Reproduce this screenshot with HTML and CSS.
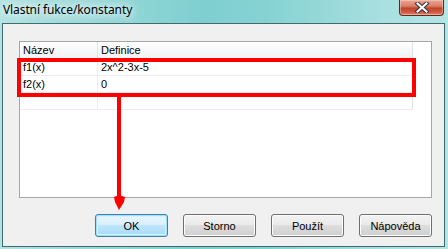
FILE: index.html
```html
<!DOCTYPE html>
<html>
<head>
<meta charset="utf-8">
<link rel="stylesheet" href="styles.css">
</head>
<body>
<div class="window">
  <div class="titlebar">
    <span class="title">Vlastní fukce/konstanty</span>
    <div class="close">
      <svg width="16" height="11" viewBox="0 0 16 11"><path d="M3.5 1.5 L12.5 9.5 M12.5 1.5 L3.5 9.5" stroke="#3b3b4a" stroke-width="4.2" stroke-linecap="square"/><path d="M3.5 1.5 L12.5 9.5 M12.5 1.5 L3.5 9.5" stroke="#ffffff" stroke-width="2" stroke-linecap="square"/></svg>
    </div>
  </div>
  <div class="client">
    <div class="list">
      <div class="row head">
        <div class="c1">Název</div>
        <div class="c2">Definice</div>
      </div>
      <div class="row">
        <div class="c1">f1(x)</div>
        <div class="c2">2x^2-3x-5</div>
      </div>
      <div class="row">
        <div class="c1">f2(x)</div>
        <div class="c2">0</div>
      </div>
      <div class="row">
        <div class="c1"></div>
        <div class="c2"></div>
      </div>
    </div>
    <div class="buttons">
      <button class="btn default">OK</button>
      <button class="btn">Storno</button>
      <button class="btn">Použít</button>
      <button class="btn">Nápověda</button>
    </div>
  </div>
</div>
<svg class="annot" width="448" height="249" viewBox="0 0 448 249">
  <rect x="19" y="60" width="395" height="35" fill="none" stroke="#ff0000" stroke-width="4"/>
  <rect x="117" y="96" width="4" height="101" fill="#ff0000"/>
  <path d="M114 197 Q119 194 125 197 L124 202 L119 210 L115 202 Z" fill="#ff0000"/>
</svg>
</body>
</html>
```
FILE: styles.css
```css
* { box-sizing: border-box; }
html, body { margin: 0; padding: 0; }
body {
  width: 448px;
  height: 249px;
  overflow: hidden;
  position: relative;
  font-family: "Liberation Sans", Arial, sans-serif;
  font-size: 11px;
  color: #000;
}
.window {
  width: 448px;
  height: 249px;
  display: flex;
  flex-direction: column;
  background: linear-gradient(90deg, #b4e3e3 0%, #a3dcdc 12%, #7fcfd0 45%, #86d2d3 60%, #a8dfdf 85%, #b5e5e5 100%);
}
.titlebar {
  height: 23px;
  flex: none;
  display: flex;
  align-items: flex-start;
  justify-content: space-between;
  position: relative;
}
.title {
  font-family: "Noto Sans", "Open Sans", sans-serif;
  font-size: 12px;
  line-height: 16px;
  margin: 2px 0 0 3px;
  color: #000;
  text-shadow: 0 0 6px #e8fafa, 0 0 10px #e8fafa, 0 0 14px #e8fafa;
  letter-spacing: -0.1px;
}
.close {
  width: 45px;
  height: 16px;
  margin-right: 4px;
  border: 1px solid #5b2a24;
  border-top: none;
  border-radius: 0 0 4px 4px;
  background: linear-gradient(180deg, #e9a793 0%, #d9806a 40%, #c2432a 55%, #cc5a3e 80%, #e0876c 100%);
  box-shadow: inset 0 0 0 1px rgba(255,220,210,0.45);
  display: flex;
  align-items: center;
  justify-content: center;
}
.client {
  flex: 1;
  margin: 0 3px 2px 2px;
  border: 1px solid #3f6a6e;
  background: #f0f0f0;
  display: flex;
  flex-direction: column;
  padding: 17px 12px 9px 16px;
}
.list {
  height: 157px;
  width: 413px;
  border: 1px solid #a6a6a6;
  background: #fff;
  flex: none;
}
.row {
  display: flex;
  height: 17px;
  border-bottom: 1px solid #ececec;
  width: 393px;
}
.row .c1 {
  width: 78px;
  border-right: 1px solid #ececec;
  padding-left: 3px;
  line-height: 16px;
}
.row .c2 {
  width: 315px;
  border-right: 1px solid #e2e2e2;
  padding-left: 3px;
  line-height: 16px;
}
.row.head {
  background: linear-gradient(180deg, #ffffff 0%, #f7f8f9 50%, #f1f2f4 100%);
  border-bottom: 1px solid #e5e5e5;
}
.row.head .c1 { border-right: 1px solid #e3e4e6; }
.buttons {
  margin-top: 16px;
  display: flex;
  justify-content: flex-end;
  gap: 15px;
}
.btn {
  width: 73px;
  height: 23px;
  font-family: "Liberation Sans", Arial, sans-serif;
  font-size: 11px;
  color: #000;
  border: 1px solid #707070;
  border-radius: 3px;
  background: linear-gradient(180deg, #f2f2f2 0%, #ebebeb 45%, #dddddd 50%, #cfcfcf 100%);
  box-shadow: inset 0 0 0 1px #fcfcfc;
  padding: 0;
  margin: 0;
}
.btn.default {
  border-color: #3c7fb1;
  background: linear-gradient(180deg, #eaf6fd 0%, #d9f0fc 45%, #bee6fd 50%, #a7d9f5 100%);
  box-shadow: inset 0 0 0 1px #9fe0fb, inset 0 0 0 2px #d6f1fc;
}
.annot {
  position: absolute;
  left: 0;
  top: 0;
  pointer-events: none;
}
```
